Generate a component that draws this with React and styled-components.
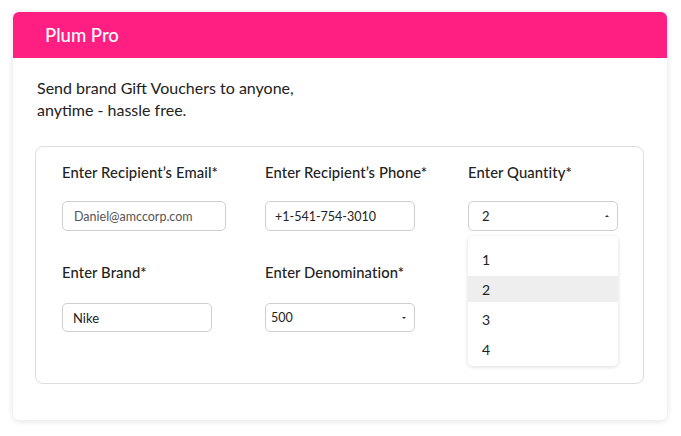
import React from 'react';
import styled, { createGlobalStyle } from 'styled-components';

const GlobalStyle = createGlobalStyle`
    body {
        margin: 0;
        background: #ffffff;
        font-family: 'Lato', 'Noto Sans', sans-serif;
    }
`;

const Page = styled.div`
    padding: 12px 14px 16px 13px;
`;

const Card = styled.div`
    width: 654px;
    height: 408px;
    background: #fff;
    border-radius: 6px;
    box-shadow: 0 1px 6px rgba(0, 0, 0, 0.12);
    display: flex;
    flex-direction: column;
`;

const Header = styled.div`
    flex-shrink: 0;
    height: 46px;
    background: #ff1e82;
    border-radius: 6px 6px 0 0;
    display: flex;
    align-items: center;
    padding-left: 32px;
    color: #fff;
    font-size: 18.5px;
    font-weight: 500;
`;

const Body = styled.div`
    padding: 19px 23px 36px 22px;
`;

const Intro = styled.p`
    margin: 0 0 25px 2px;
    font-size: 16px;
    line-height: 22px;
    color: #222;
`;

const FormBox = styled.div`
    border: 1px solid #dedede;
    border-radius: 8px;
    padding: 15px 0 51px 26px;
    display: grid;
    grid-template-columns: 203px 203px 1fr;
    row-gap: 31px;
`;

const Field = styled.div`
    position: relative;
    display: flex;
    flex-direction: column;
    gap: ${props => props.gap || 19}px;
`;

const Label = styled.label`
    font-size: 14.8px;
    line-height: 20px;
    font-weight: 500;
    color: #222;
    letter-spacing: 0.1px;
`;

const Input = styled.div`
    box-sizing: border-box;
    width: ${props => props.width || 150}px;
    height: ${props => props.height || 30}px;
    border: 1px solid #cfcfcf;
    border-radius: 5px;
    display: flex;
    align-items: center;
    justify-content: space-between;
    padding: 0 ${props => (props.select ? 8 : 10)}px 0 ${props => props.indent || 10}px;
    font-size: ${props => props.size || 12.5}px;
    color: ${props => props.color || '#222'};
`;

const Caret = styled.span`
    width: 0;
    height: 0;
    border-left: 2px solid transparent;
    border-right: 2px solid transparent;
    ${props =>
        props.up
            ? 'border-bottom: 2px solid #333;'
            : 'border-top: 2px solid #333;'}
`;

const Menu = styled.ul`
    position: absolute;
    top: 74px;
    left: 0;
    width: 150px;
    box-sizing: border-box;
    margin: 0;
    padding: 10px 0 4px;
    list-style: none;
    background: #fff;
    border-radius: 5px;
    box-shadow: 0 1px 4px rgba(0, 0, 0, 0.14);
    display: flex;
    flex-direction: column;
    gap: 4px;
`;

const Option = styled.li`
    height: 26px;
    display: flex;
    align-items: center;
    padding-left: 14px;
    font-size: 14px;
    color: #222;
    background: ${props => (props.active ? '#eeeeee' : 'transparent')};
`;

const quantities = ['1', '2', '3', '4'];

const App = () => (
    <Page>
        <GlobalStyle />
        <Card>
            <Header>Plum Pro</Header>
            <Body>
                <Intro>
                    Send brand Gift Vouchers to anyone,
                    <br />
                    anytime - hassle free.
                </Intro>
                <FormBox>
                    <Field>
                        <Label>Enter Recipient’s Email*</Label>
                        <Input width={164} indent={11} color="#555">
                            Daniel@amccorp.com
                        </Input>
                    </Field>
                    <Field>
                        <Label>Enter Recipient’s Phone*</Label>
                        <Input indent={9}>+1-541-754-3010</Input>
                    </Field>
                    <Field>
                        <Label>Enter Quantity*</Label>
                        <Input select indent={13} size={13}>
                            2
                            <Caret up />
                        </Input>
                        <Menu>
                            {quantities.map(q => (
                                <Option key={q} active={q === '2'}>
                                    {q}
                                </Option>
                            ))}
                        </Menu>
                    </Field>
                    <Field gap={21}>
                        <Label>Enter Brand*</Label>
                        <Input indent={10} size={13} height={29}>
                            Nike
                        </Input>
                    </Field>
                    <Field gap={21}>
                        <Label>Enter Denomination*</Label>
                        <Input select indent={5} size={12.5} height={29}>
                            500
                            <Caret />
                        </Input>
                    </Field>
                </FormBox>
            </Body>
        </Card>
    </Page>
);

export default App;
